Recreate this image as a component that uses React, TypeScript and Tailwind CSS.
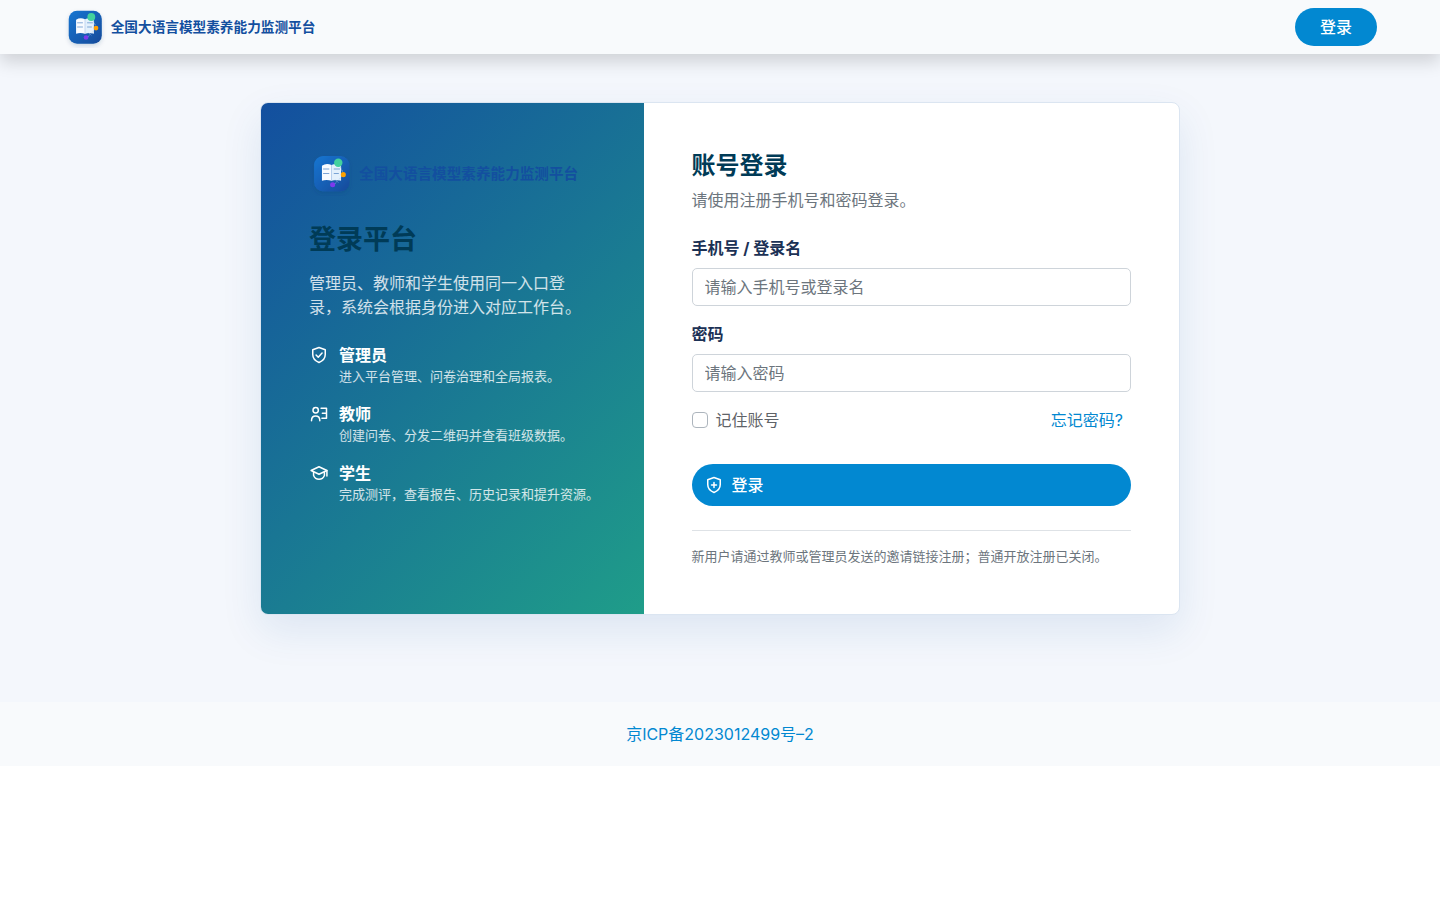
import type { ReactNode } from "react";

function Logo({ className, id }: { className: string; id: string }) {
  return (
    <svg viewBox="0 0 480 80" className={className} role="img" aria-label="全国大语言模型素养能力监测平台">
      <defs>
        <linearGradient id={`${id}-bg`} x1="0" y1="0" x2="1" y2="1">
          <stop offset="0" stopColor="#1976d2" />
          <stop offset="1" stopColor="#134a9a" />
        </linearGradient>
        <filter id={`${id}-shadow`} x="-20%" y="-20%" width="140%" height="150%">
          <feDropShadow dx="0" dy="4" stdDeviation="4" floodColor="#0d3470" floodOpacity="0.18" />
        </filter>
      </defs>
      <rect x="9" y="9" width="63" height="63" rx="16" fill={`url(#${id}-bg)`} filter={`url(#${id}-shadow)`} />
      <path d="M23 26q8-5 17-1v28q-9-3-17 0z" fill="#f8fbff" />
      <path d="M40 25q9-4 17 1v27q-8-3-17 0z" fill="#e3f0fc" />
      <path d="M40 25v28" stroke="#b8d0ee" strokeWidth="1.5" />
      <path d="M25 32h11M25 40h11M44 32h11M44 40h9" stroke="#6f9bd0" strokeWidth="1.6" />
      <path d="M53 22l9 20-18 18M47 51l5 5" fill="none" stroke="#a7c7ec" strokeWidth="1.2" strokeDasharray="4 2" />
      <circle cx="52" cy="21" r="7.5" fill="#43d19e" />
      <circle cx="61" cy="42" r="4.5" fill="#ffa000" />
      <circle cx="42" cy="60" r="4.5" fill="#7c3aed" />
      <text x="89" y="49" fontSize="26" fontWeight="700" fill="#134f9f">
        全国大语言模型素养能力监测平台
      </text>
    </svg>
  );
}

function Icon({ children }: { children: ReactNode }) {
  return (
    <svg
      viewBox="0 0 24 24"
      className="size-5 shrink-0"
      fill="none"
      stroke="currentColor"
      strokeWidth="1.8"
      strokeLinecap="round"
      strokeLinejoin="round"
      aria-hidden="true"
    >
      {children}
    </svg>
  );
}

const shield = "M12 3l7.5 2.7v5.8c0 4.3-2.9 7.7-7.5 9.5-4.6-1.8-7.5-5.2-7.5-9.5V5.7z";

const roles = [
  {
    title: "管理员",
    text: "进入平台管理、问卷治理和全局报表。",
    icon: (
      <>
        <path d={shield} />
        <path d="M8.5 12l2.6 2.6 4.6-4.9" />
      </>
    ),
  },
  {
    title: "教师",
    text: "创建问卷、分发二维码并查看班级数据。",
    icon: (
      <>
        <circle cx="8" cy="7.5" r="3.2" />
        <path d="M3 20c0-3.5 2-5.5 5-5.5s5 2 5 5.5" />
        <path d="M14.5 5h6.500v12h-5.500M16 11h5" />
      </>
    ),
  },
  {
    title: "学生",
    text: "完成测评，查看报告、历史记录和提升资源。",
    icon: (
      <>
        <path d="M2.5 9L12 4.500l9.500 4.500L12 13.500z" />
        <path d="M5.500 11v4c1.200 3 3.500 4.500 6.500 4.500s5.300-1.500 6.500-4.500v-4M21.500 9v6.500" />
      </>
    ),
  },
];

const inputClass =
  "h-[38px] w-full rounded-[5px] border border-[#ced4da] bg-white px-3 text-base text-[#212529] placeholder:text-[#6c757d]";

export default function App() {
  return (
    <div className="font-['Inter','Noto_Sans_CJK_SC',sans-serif] text-base text-[#212529]" lang="zh-CN">
      <header className="relative flex h-[54px] items-center justify-between bg-[#f8fafc] pr-[63px] pl-16 shadow-[0_8px_16px_rgba(0,0,0,0.15)]">
        <a href="#home">
          <Logo className="h-[42px]" id="nav" />
        </a>
        <a href="#login" className="flex h-[38px] items-center rounded-full bg-[#0288d1] px-[25px] font-medium text-white">
          登录
        </a>
      </header>

      <main className="bg-[#f4f7fc] px-6 pt-12 pb-[87px]">
        <div className="mx-auto grid max-w-[920px] grid-cols-[minmax(0,5fr)_minmax(0,7fr)] overflow-hidden rounded-lg border border-[#dbe5f1] bg-white shadow-[0_16px_40px_rgba(19,79,159,0.1)]">
          <section className="bg-[linear-gradient(135deg,#134f9f,#1f9d89)] p-12 text-white">
            <Logo className="h-[45px]" id="card" />
            <h1 className="mt-7 text-[27px] leading-8 font-bold text-[#003b57]">登录平台</h1>
            <p className="mt-[15px] leading-6 text-white/80">
              管理员、教师和学生使用同一入口登录，系统会根据身份进入对应工作台。
            </p>
            <ul className="mt-6 flex flex-col gap-4">
              {roles.map((role) => (
                <li key={role.title} className="flex gap-2.5">
                  <div className="flex h-6 items-center">
                    <Icon>{role.icon}</Icon>
                  </div>
                  <div>
                    <strong className="block leading-6 font-bold">{role.title}</strong>
                    <span className="block text-[13px] leading-[19px] whitespace-nowrap text-white/80">{role.text}</span>
                  </div>
                </li>
              ))}
            </ul>
          </section>

          <section className="p-12">
            <h2 className="text-2xl leading-[29px] font-bold text-[#003b57]">账号登录</h2>
            <p className="mt-2 leading-6 text-[#6c757d]">请使用注册手机号和密码登录。</p>
            <form className="mt-6" onSubmit={(e) => e.preventDefault()}>
              <label htmlFor="account" className="mb-2 block leading-6 font-bold text-[#1b3155]">
                手机号 / 登录名
              </label>
              <input id="account" type="text" placeholder="请输入手机号或登录名" className={inputClass} />
              <label htmlFor="password" className="mt-4 mb-2 block leading-6 font-bold text-[#1b3155]">
                密码
              </label>
              <input id="password" type="password" placeholder="请输入密码" className={inputClass} />
              <div className="mt-4 flex items-center justify-between leading-6">
                <label htmlFor="remember" className="flex items-center gap-2 text-[#5f6368]">
                  <input
                    id="remember"
                    type="checkbox"
                    className="size-4 appearance-none rounded-[4px] border border-[#adb5bd] bg-white checked:bg-[#0288d1]"
                  />
                  记住账号
                </label>
                <a href="#forgot" className="pr-2 text-[#0288d1]">
                  忘记密码?
                </a>
              </div>
              <button
                type="submit"
                className="mt-8 flex h-[42px] w-full items-center gap-2 rounded-full bg-[#0288d1] px-3 font-medium text-white"
              >
                <Icon>
                  <path d={shield} />
                  <path d="M12 9v6M9 12h6" />
                </Icon>
                登录
              </button>
            </form>
            <hr className="mt-6 border-[#dee2e6]" />
            <p className="mt-4 text-[13px] leading-[19px] text-[#6c757d]">
              新用户请通过教师或管理员发送的邀请链接注册；普通开放注册已关闭。
            </p>
          </section>
        </div>
      </main>

      <footer className="bg-[#f8fafc] py-5 text-center leading-6">
        <a href="#icp" className="text-[#0288d1]">
          京ICP备2023012499号–2
        </a>
      </footer>
    </div>
  );
}
